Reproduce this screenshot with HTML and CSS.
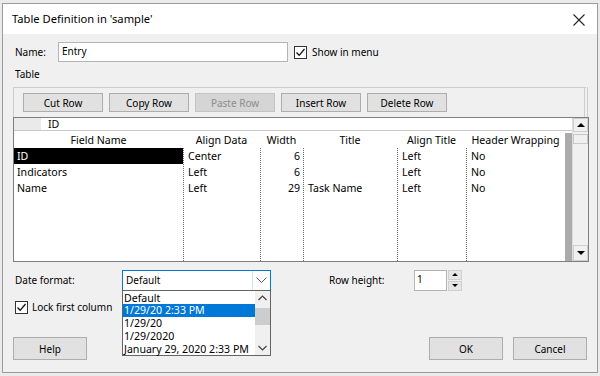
FILE: index.html
```html
<!DOCTYPE html>
<html>
<head lang="en">
    <meta charset="UTF-8">
    <title>Table Definition</title>
<link rel="stylesheet" href="styles.css">
</head>
<body>
  <div class="window">
    <div class="titlebar">
      <span class="titleText">Table Definition in 'sample'</span>
      <svg class="closeIcon" width="12" height="12" viewBox="0 0 12 12"><path d="M0.5 0.5 L11.5 11.5 M11.5 0.5 L0.5 11.5" stroke="#222" stroke-width="1.1" fill="none"/></svg>
    </div>

    <div class="content">
      <div class="nameRow">
        <label class="nameLabel">Name:</label>
        <div class="textbox nameBox">Entry</div>
        <span class="check"><svg width="11" height="11" viewBox="0 0 11 11"><path d="M1.5 5.5 L4.2 8.3 L9.5 2" stroke="#111" stroke-width="1.3" fill="none"/></svg></span>
        <span class="checkLabel">Show in menu</span>
      </div>

      <div class="sectionLabel">Table</div>

      <div class="tableBox">
        <div class="toolbar">
          <button class="btn tool">Cut Row</button>
          <button class="btn tool">Copy Row</button>
          <button class="btn tool disabled">Paste Row</button>
          <button class="btn tool">Insert Row</button>
          <button class="btn tool">Delete Row</button>
        </div>

        <div class="grid">
          <div class="gridMain">
            <div class="editBar">
              <span class="editCorner"></span>
              <span class="editText">ID</span>
            </div>
            <div class="gridHead">
              <span class="c1">Field Name</span>
              <span class="c2">Align Data</span>
              <span class="c3">Width</span>
              <span class="c4">Title</span>
              <span class="c5">Align Title</span>
              <span class="c6">Header Wrapping</span>
              <span class="cGap"></span>
            </div>
            <div class="gridBody">
              <div class="col c1">
                <span class="cell selected">ID</span>
                <span class="cell">Indicators</span>
                <span class="cell">Name</span>
              </div>
              <div class="col c2 dotted">
                <span class="cell">Center</span>
                <span class="cell">Left</span>
                <span class="cell">Left</span>
              </div>
              <div class="col c3 dotted num">
                <span class="cell">6</span>
                <span class="cell">6</span>
                <span class="cell">29</span>
              </div>
              <div class="col c4 dotted">
                <span class="cell"></span>
                <span class="cell"></span>
                <span class="cell">Task Name</span>
              </div>
              <div class="col c5 dotted">
                <span class="cell">Left</span>
                <span class="cell">Left</span>
                <span class="cell">Left</span>
              </div>
              <div class="col c6 dotted">
                <span class="cell">No</span>
                <span class="cell">No</span>
                <span class="cell">No</span>
              </div>
              <div class="col cGap"></div>
            </div>
          </div>
          <div class="vscroll">
            <span class="sbtn"><i class="triUp"></i></span>
            <span class="thumb"></span>
            <span class="track"></span>
            <span class="sbtn"><i class="triDown"></i></span>
          </div>
        </div>
      </div>

      <div class="options">
        <div class="optRow">
          <label class="dateLabel">Date format:</label>
          <div class="combo">
            <span class="comboText">Default</span>
            <span class="comboArrow"><svg width="11" height="6" viewBox="0 0 11 6"><path d="M0.5 0.5 L5.5 5.5 L10.5 0.5" stroke="#555" stroke-width="1" fill="none"/></svg></span>
            <div class="dropList">
              <div class="items">
                <span class="item">Default</span>
                <span class="item active">1/29/20 2:33 PM</span>
                <span class="item">1/29/20</span>
                <span class="item">1/29/2020</span>
                <span class="item">January 29, 2020 2:33 PM</span>
              </div>
              <div class="listScroll">
                <svg width="9" height="6" viewBox="0 0 9 6"><path d="M0.5 5 L4.5 1 L8.5 5" stroke="#444" stroke-width="1.2" fill="none"/></svg>
                <span class="listThumb"></span>
                <span class="listTrack"></span>
                <svg width="9" height="6" viewBox="0 0 9 6"><path d="M0.5 1 L4.5 5 L8.5 1" stroke="#444" stroke-width="1.2" fill="none"/></svg>
              </div>
            </div>
          </div>
          <label class="rowLabel">Row height:</label>
          <div class="textbox spinBox">1</div>
          <div class="spin">
            <span class="spinBtn"><i class="triUp small"></i></span>
            <span class="spinBtn"><i class="triDown small"></i></span>
          </div>
        </div>

        <div class="lockRow">
          <span class="check"><svg width="11" height="11" viewBox="0 0 11 11"><path d="M1.5 5.5 L4.2 8.3 L9.5 2" stroke="#111" stroke-width="1.3" fill="none"/></svg></span>
          <span class="checkLabel">Lock first column</span>
        </div>

        <div class="buttons">
          <button class="btn big">Help</button>
          <div class="okCancel">
            <button class="btn big">OK</button>
            <button class="btn big">Cancel</button>
          </div>
        </div>
      </div>
    </div>
  </div>
</body>
</html>
```

FILE: styles.css
```css
body, html {
  border: 0;
  padding: 0;
  margin: 0;
  overflow: hidden;
  background: #ebebeb;
}

body {
  font-family: "Noto Sans", sans-serif;
  font-size: 10px;
  color: #000;
}

.window {
  box-sizing: border-box;
  margin: 3px 0 0 2px;
  width: 596px;
  height: 370px;
  border: 1px solid #9a9a9a;
  background: #f0f0f0;
  display: flex;
  flex-direction: column;
}

.titlebar {
  height: 30px;
  background: #fff;
  display: flex;
  align-items: center;
  justify-content: space-between;
  padding: 0 12px 0 9px;
  font-size: 11.2px;
}

.titleText {
  margin-top: -1px;
}

.closeIcon {
  margin-top: 1px;
}

.content {
  padding: 8px 9px 0 10px;
  display: flex;
  flex-direction: column;
}

/* name row */
.nameRow {
  display: flex;
  align-items: center;
  height: 20px;
}

.nameLabel {
  width: 43px;
  padding-left: 2px;
}

.textbox {
  box-sizing: border-box;
  background: #fff;
  border: 1px solid #b4b4b4;
  height: 20px;
  line-height: 17px;
  padding-left: 3px;
}

.nameBox {
  width: 230px;
}

.check {
  box-sizing: border-box;
  width: 13px;
  height: 13px;
  border: 1px solid #333;
  background: #fff;
  display: flex;
  align-items: center;
  justify-content: center;
}

.nameRow .check {
  margin-left: 6px;
}

.checkLabel {
  margin-left: 5px;
}

.sectionLabel {
  margin: 5px 0 6px 2px;
  line-height: 14px;
}

/* table box */
.tableBox {
  border: 1px solid #cdcdcd;
  border-right: 4px double #cdcdcd;
}

.toolbar {
  display: flex;
  gap: 6px;
  padding: 5px 9px 5px;
}

.btn {
  box-sizing: border-box;
  font-family: "Noto Sans", sans-serif;
  font-size: 10px;
  background: #e1e1e1;
  border: 1px solid #adadad;
  color: #000;
  padding: 0;
}

.tool {
  width: 80px;
  height: 19px;
}

.tool.disabled {
  background: #d5d5d5;
  border-color: #c4c4c4;
  color: #8d8d8d;
}

.grid {
  display: flex;
  height: 145px;
  box-sizing: border-box;
  border: 1px solid #7e7e7e;
  margin: 0 -5px -1px -1px;
  font-size: 10.6px;
}

.gridMain {
  flex: 1;
  display: flex;
  flex-direction: column;
  background: #fff;
}

.editBar {
  height: 12px;
  display: flex;
  border-bottom: 1px solid #c9c9c9;
  line-height: 12px;
}

.editCorner {
  width: 27px;
  background: #eaeaea;
}

.editText {
  padding-left: 7px;
}

.gridHead {
  display: flex;
  height: 15px;
  line-height: 15px;
  margin-top: 2px;
  text-align: center;
}

.gridBody {
  flex: 1;
  display: flex;
}

.col {
  display: flex;
  flex-direction: column;
}

.dotted {
  border-left: 1px dotted #6b6b6b;
}

.c1 { width: 169px; }
.c2 { width: 76px; }
.c3 { width: 42px; }
.c4 { width: 93px; }
.c5 { width: 68px; }
.c6 { width: 98px; }
.cGap {
  flex: 1;
  background: #ababab;
}

.gridHead .c2 { width: 77px; }
.gridHead .c3 { width: 43px; }
.gridHead .c4 { width: 94px; }
.gridHead .c5 { width: 69px; }
.gridHead .c6 { width: 99px; }

.cell {
  height: 16px;
  line-height: 16px;
  padding-left: 4px;
  white-space: nowrap;
}

.c1 .cell {
  padding-left: 3px;
}

.num .cell {
  text-align: right;
  padding: 0 3px 0 0;
}

.cell.selected {
  background: #000;
  color: #fff;
}

.vscroll {
  width: 15px;
  display: flex;
  flex-direction: column;
  background: #f0f0f0;
  border-left: 1px solid #dcdcdc;
}

.sbtn {
  height: 14px;
  background: #f0f0f0;
  border: 1px solid #cfcfcf;
  box-sizing: border-box;
  display: flex;
  align-items: center;
  justify-content: center;
}

.sbtn:last-child {
  height: 16px;
}

.thumb {
  height: 8px;
  margin-top: 2px;
  border: 1px solid #c8c8c8;
  background: #f0f0f0;
}

.track {
  flex: 1;
}

.triUp, .triDown {
  width: 0;
  height: 0;
  border-left: 4px solid transparent;
  border-right: 4px solid transparent;
}

.triUp {
  border-bottom: 4px solid #000;
}

.triDown {
  border-top: 4px solid #000;
}

.triUp.small, .triDown.small {
  border-left-width: 3px;
  border-right-width: 3px;
}

.triUp.small { border-bottom-width: 3px; }
.triDown.small { border-top-width: 3px; }

/* options */
.options {
  display: flex;
  flex-direction: column;
  margin-top: 8px;
}

.optRow {
  display: flex;
  align-items: center;
  height: 20px;
}

.dateLabel {
  width: 107px;
  padding-left: 2px;
}

.combo {
  position: relative;
  box-sizing: border-box;
  width: 149px;
  height: 21px;
  border: 1px solid #0078d7;
  background: #fff;
  display: flex;
  align-items: center;
}

.comboText {
  flex: 1;
  padding-left: 3px;
}

.comboArrow {
  width: 17px;
  height: 19px;
  border-left: 1px solid #cce4f7;
  display: flex;
  align-items: center;
  justify-content: center;
}

.dropList {
  position: absolute;
  left: -1px;
  top: 19px;
  width: 149px;
  height: 66px;
  box-sizing: border-box;
  border: 1px solid #646464;
  background: #fff;
  display: flex;
  z-index: 2;
  font-size: 10.6px;
}

.items {
  flex: 1;
  display: flex;
  flex-direction: column;
  padding-top: 1px;
}

.item {
  height: 12.8px;
  line-height: 12.8px;
  padding-left: 1px;
  white-space: nowrap;
}

.item.active {
  background: #0078d7;
  color: #fff;
}

.listScroll {
  width: 15px;
  background: #f0f0f0;
  display: flex;
  flex-direction: column;
  align-items: center;
  padding: 4px 0 4px;
  box-sizing: border-box;
}

.listThumb {
  width: 15px;
  height: 17px;
  margin-top: 7px;
  background: #cdcdcd;
}

.listTrack {
  flex: 1;
}

.rowLabel {
  margin-left: 58px;
  width: 85px;
}

.spinBox {
  width: 33px;
  height: 21px;
  padding-left: 2px;
}

.spin {
  display: flex;
  flex-direction: column;
  gap: 1px;
  margin-left: 1px;
}

.spinBtn {
  box-sizing: border-box;
  width: 14px;
  height: 10px;
  background: #e6e6e6;
  border: 1px solid #cfcfcf;
  display: flex;
  align-items: center;
  justify-content: center;
}

.lockRow {
  display: flex;
  align-items: center;
  margin-top: 10px;
  margin-left: 2px;
}

.lockRow .checkLabel {
  margin-left: 4px;
}

.buttons {
  display: flex;
  justify-content: space-between;
  margin-top: 23px;
}

.okCancel {
  display: flex;
  gap: 10px;
  margin-right: 1px;
}

.big {
  width: 74px;
  height: 23px;
}
```
